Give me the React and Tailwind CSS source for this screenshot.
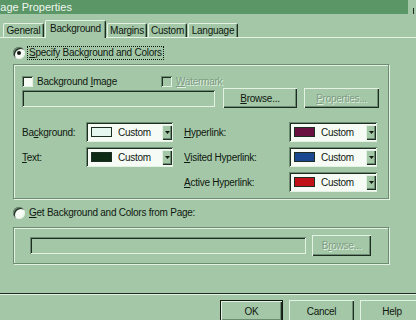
const raised =
  "shadow-[inset_1px_1px_0_#e4f2e4,inset_-1px_-1px_0_#1e2d21,inset_-2px_-2px_0_#6d8d72]";
const sunken =
  "shadow-[inset_1px_1px_0_#6d8d72,inset_-1px_-1px_0_#e4f2e4,inset_2px_2px_0_#1e2d21]";
const disabledText = "text-[#7d9c82] [text-shadow:1px_1px_0_#e4f2e4]";

function Radio({ checked }) {
  return (
    <div
      className={`w-[12px] h-[12px] rounded-full bg-[#f6fbf6] flex items-center justify-center shrink-0 ${sunken}`}
    >
      {checked && <div className="w-[4px] h-[4px] rounded-full bg-[#101810]" />}
    </div>
  );
}

function Check({ disabled }) {
  return (
    <div
      className={`w-[11px] h-[11px] shrink-0 ${disabled ? "bg-[#a3c7a7]" : "bg-[#f6fbf6]"} ${sunken}`}
    />
  );
}

function Arrow() {
  return (
    <div className={`w-[10px] h-[15px] bg-[#a3c7a7] ${raised} flex items-center justify-center shrink-0`}>
      <svg width="5" height="3" viewBox="0 0 5 3">
        <path d="M0 0h5L2.5 3z" fill="#101810" />
      </svg>
    </div>
  );
}

function Combo({ w, swatch }) {
  return (
    <div className={`${w} h-[20px] bg-[#f6fbf6] ${sunken} flex items-center pl-[5px] pr-[1px] shrink-0`}>
      <div className={`w-[21px] h-[10px] border border-[#1e2d21] ${swatch}`} />
      <span className="ml-[6px] flex-1">Custom</span>
      <Arrow />
    </div>
  );
}

function Btn({ w, h = "h-[20px]", disabled, children, extra = "" }) {
  return (
    <div
      className={`${w} ${h} bg-[#a3c7a7] ${raised} flex items-center justify-center shrink-0 ${disabled ? disabledText : ""} ${extra}`}
    >
      {children}
    </div>
  );
}

function Tab({ w, selected, children }) {
  return (
    <div
      className={`${w} ${selected ? "h-[18px] -mb-px relative z-10 pb-[3px]" : "h-[14px]"} mr-[1px] bg-[#a3c7a7] border-l border-t border-[#e4f2e4] border-r border-r-[#1e2d21] rounded-t-[2px] shadow-[inset_-1px_0_0_#6d8d72] flex items-center justify-center shrink-0`}
    >
      {children}
    </div>
  );
}

function U({ children }) {
  return <span className="underline underline-offset-[1px]">{children}</span>;
}

export default function App() {
  return (
    <div className="w-[416px] h-[320px] overflow-hidden bg-[#a3c7a7] flex flex-col text-[#101810] text-[10px] tracking-[-0.25px] font-['Liberation_Sans',Arial,sans-serif]">
      {/* title bar */}
      <div className="h-[14px] flex shrink-0">
        <div className="w-[408px] bg-[#5b9667] text-[#eef6ee] text-[11px] leading-[14px] tracking-normal whitespace-nowrap overflow-hidden">
          <span className="inline-block -ml-[7px]">Page Properties</span>
        </div>
        <div className="flex-1 flex justify-end items-end">
          <div className="w-[1px] h-[6px] bg-[#1e2d21] mr-[2px]" />
        </div>
      </div>

      {/* tabs */}
      <div className="h-[23px] flex items-end pl-[3px] shrink-0">
        <Tab w="w-[41px]">General</Tab>
        <Tab w="w-[61px]" selected>
          Background
        </Tab>
        <Tab w="w-[40px]">Margins</Tab>
        <Tab w="w-[39px]">Custom</Tab>
        <Tab w="w-[50px]">Language</Tab>
      </div>

      {/* panel */}
      <div className="h-[257px] shrink-0 border-t border-[#e4f2e4] border-b border-b-[#1e2d21] flex flex-col">
        <div className="mt-[9px] h-[12px] flex items-center pl-[13px]">
          <Radio checked />
          <span className="ml-[3px] px-[1px] leading-[12px] outline-1 outline-dotted outline-[#101810]">
            <U>S</U>pecify Background and Colors
          </span>
        </div>

        <div className="mt-[5px] ml-[13px] w-[376px] h-[135px] border border-[#6d8d72] shadow-[inset_1px_1px_0_#e4f2e4,1px_1px_0_#e4f2e4] pl-[8px] pt-[11px] flex flex-col">
          <div className="h-[11px] flex items-center">
            <div className="w-[139px] flex items-center">
              <Check />
              <span className="ml-[4px]">
                Background <U>I</U>mage
              </span>
            </div>
            <Check disabled />
            <span className={`ml-[4px] ${disabledText}`}>
              <U>W</U>atermark
            </span>
          </div>

          <div className="mt-[1px] h-[20px] flex items-center">
            <div className={`w-[193px] h-[17px] ${sunken}`} />
            <Btn w="w-[74px] ml-[8px]">
              <span>
                <U>B</U>rowse...
              </span>
            </Btn>
            <Btn w="w-[75px] ml-[7px]" disabled>
              <span>
                <U>P</U>roperties...
              </span>
            </Btn>
          </div>

          <div className="mt-[14px] flex flex-col gap-[5px]">
            <div className="h-[20px] flex items-center">
              <span className="w-[64px]">
                Ba<U>c</U>kground:
              </span>
              <Combo w="w-[87px]" swatch="bg-[#e6f6f0]" />
              <span className="ml-[11px] w-[105px]">
                <U>H</U>yperlink:
              </span>
              <Combo w="w-[88px]" swatch="bg-[#6a1040]" />
            </div>
            <div className="h-[20px] flex items-center">
              <span className="w-[64px]">
                <U>T</U>ext:
              </span>
              <Combo w="w-[87px]" swatch="bg-[#0c2a14]" />
              <span className="ml-[11px] w-[105px]">
                <U>V</U>isited Hyperlink:
              </span>
              <Combo w="w-[88px]" swatch="bg-[#1a4890]" />
            </div>
            <div className="h-[20px] flex items-center">
              <span className="w-[64px]" />
              <div className="w-[87px]" />
              <span className="ml-[11px] w-[105px]">
                <U>A</U>ctive Hyperlink:
              </span>
              <Combo w="w-[88px]" swatch="bg-[#c01018]" />
            </div>
          </div>
        </div>

        <div className="mt-[8px] h-[12px] flex items-center pl-[13px]">
          <Radio />
          <span className="ml-[4px] leading-[12px]">
            <U>G</U>et Background and Colors from Page:
          </span>
        </div>

        <div className="mt-[8px] ml-[13px] w-[376px] h-[37px] border border-[#6d8d72] shadow-[inset_1px_1px_0_#e4f2e4,1px_1px_0_#e4f2e4] pl-[16px] flex items-center">
          <div className={`w-[276px] h-[17px] ${sunken}`} />
          <Btn w="w-[59px] ml-[6px]" h="h-[21px]" disabled>
            <span>
              B<U>r</U>owse...
            </span>
          </Btn>
        </div>
      </div>
      <div className="h-[1px] bg-[#e4f2e4] shrink-0" />

      {/* buttons */}
      <div className="mt-[5px] flex gap-[6px] pl-[220px] shrink-0">
        <div className="w-[63px] h-[22px] border border-[#101810] shrink-0 flex">
          <Btn w="w-full" h="h-full">
            OK
          </Btn>
        </div>
        <Btn w="w-[65px]" h="h-[22px]">
          Cancel
        </Btn>
        <Btn w="w-[64px]" h="h-[22px]">
          Help
        </Btn>
      </div>
    </div>
  );
}
